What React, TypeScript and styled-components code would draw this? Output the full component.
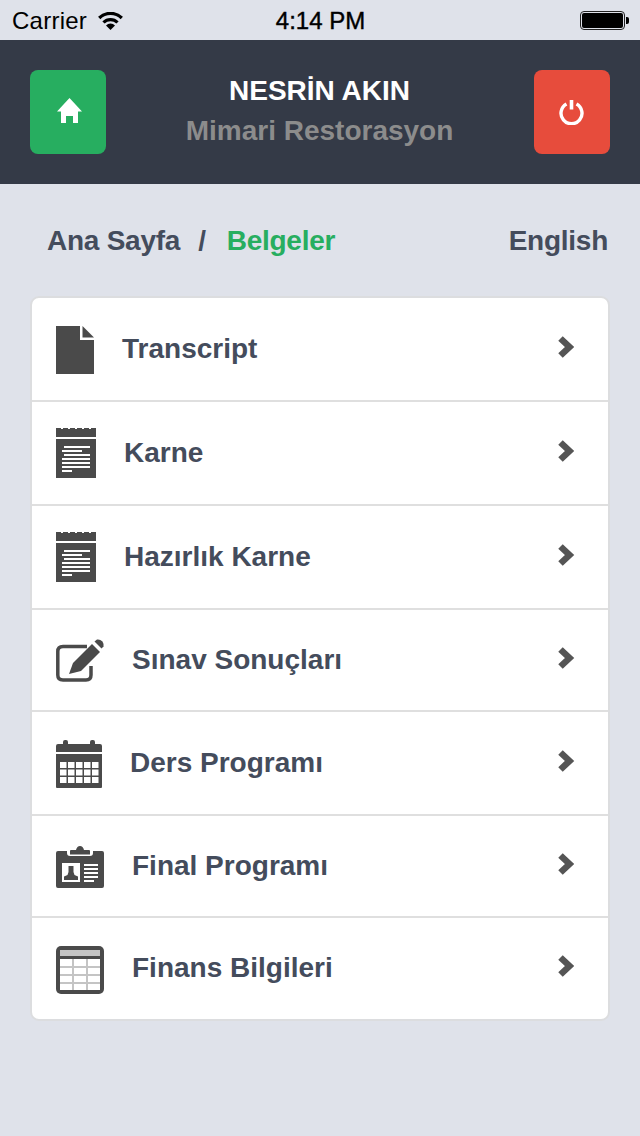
import React from "react";
import styled, { createGlobalStyle } from "styled-components";

const GlobalStyle = createGlobalStyle`
  html, body {
    margin: 0;
    padding: 0;
    background: #dfe2ea;
  }
  body {
    font-family: "Liberation Sans", Arial, sans-serif;
  }
`;

const Screen = styled.div`
  width: 640px;
  height: 1136px;
  background: #dfe2ea;
  overflow: hidden;
`;

const StatusBar = styled.div`
  height: 40px;
  display: grid;
  grid-template-columns: 1fr auto 1fr;
  align-items: center;
  padding: 2px 11px 0 12px;
  box-sizing: border-box;
  color: #000;
  font-size: 24px;
`;

const Carrier = styled.div`
  display: flex;
  align-items: center;
  gap: 11px;
  letter-spacing: 0.25px;
`;

const Clock = styled.div`
  font-weight: 400;
  -webkit-text-stroke: 0.4px #000;
`;

const Battery = styled.div`
  justify-self: end;
  display: flex;
  align-items: center;
  margin-top: -1px;
`;

const BatteryBody = styled.div`
  width: 45px;
  height: 19px;
  box-sizing: border-box;
  border: 1px solid #222;
  border-radius: 4px;
  padding: 1px;
`;

const BatteryFill = styled.div`
  height: 100%;
  background: #000;
  border-radius: 2px;
`;

const BatteryCap = styled.div`
  width: 3px;
  height: 7px;
  margin-left: 1px;
  background: #000;
  border-radius: 0 2px 2px 0;
`;

const Header = styled.header`
  height: 144px;
  background: #343a47;
  display: flex;
  align-items: center;
  justify-content: space-between;
  padding: 0 30px;
  box-sizing: border-box;
`;

const SquareButton = styled.button<{ $tone: string }>`
  width: 76px;
  height: 84px;
  border: 0;
  padding: 0;
  border-radius: 8px;
  background: ${(p) => p.$tone};
  display: flex;
  align-items: center;
  justify-content: center;
`;

const Who = styled.div`
  text-align: center;
  font-weight: 700;
  font-size: 28px;
  line-height: 40px;
  padding-bottom: 2px;
  margin-left: -1px;
`;

const Name = styled.div`
  color: #fff;
`;

const Dept = styled.div`
  color: #8c8c8c;
`;

const Crumbs = styled.nav`
  display: flex;
  align-items: center;
  justify-content: space-between;
  height: 112px;
  box-sizing: border-box;
  padding: 2px 32px 0 47px;
  font-size: 28px;
  font-weight: 700;
  letter-spacing: -0.25px;
  color: #444c5c;
`;

const Trail = styled.div`
  display: flex;
  gap: 18px;
`;

const Current = styled.span`
  color: #27ae60;
  margin-left: 3px;
`;

const Card = styled.ul`
  list-style: none;
  margin: 0 30px;
  padding: 0;
  background: #fff;
  border-radius: 9px;
  border: 2px solid #dcdddf;
  overflow: hidden;
`;

const Row = styled.li<{ $height: number }>`
  height: ${(p) => p.$height}px;
  box-sizing: border-box;
  display: flex;
  align-items: center;
  padding: 0 32px 0 24px;
  border-bottom: 2px solid #dfdfdf;
  &:last-child {
    border-bottom: 0;
  }
`;

const RowIcon = styled.div`
  display: flex;
  margin: 2px 28px 0 0;
`;

const RowLabel = styled.span`
  flex: 1;
  font-size: 28px;
  font-weight: 700;
  color: #444c5c;
  margin-bottom: 1px;
`;

const ChevronGlyph = styled.svg`
  margin-bottom: 5px;
`;

const HomeGlyph = styled.svg`
  margin: 0 0 3px 3px;
`;

const ReportGlyph = styled.svg`
  margin-top: -2px;
`;

const ICON = "#4a4a4a";

const HomeIcon = () => (
  <HomeGlyph width="25" height="25" viewBox="0 0 25 25">
    <path fill="#fff" d="M12.500 0 L25 13.500 L21 13.500 V25 H16 V18 H9 V25 H4 V13.500 H0 Z" />
  </HomeGlyph>
);

const PowerIcon = () => (
  <svg width="25" height="26" viewBox="0 0 25 26" fill="none" stroke="#fff" strokeWidth="3.400">
    <path d="M7.500 5 A10.500 10.500 0 1 0 17.500 5" />
    <path d="M12.500 1 V10.500" strokeWidth="3.600" />
  </svg>
);

const WifiIcon = () => (
  <svg width="25" height="18" viewBox="0 0 25 18" fill="none" stroke="#000" strokeWidth="3.200">
    <path d="M1.200 6 A16 16 0 0 1 23.800 6" />
    <path d="M5.500 10.500 A9.800 9.800 0 0 1 19.500 10.500" />
    <path fill="#000" stroke="none" d="M12.500 18 L8 13.500 A6.200 6.200 0 0 1 17 13.500 Z" />
  </svg>
);

const DocIcon = () => (
  <svg width="38" height="48" viewBox="0 0 38 48">
    <path fill={ICON} d="M0 0 H24 V14 H38 V48 H0 Z" />
    <path fill={ICON} d="M26.500 0 L38 11.500 H26.500 Z" />
  </svg>
);

const ReportIcon = () => (
  <ReportGlyph width="40" height="50" viewBox="0 0 40 50">
    <path fill={ICON} d="M0 1 H40 V9 H0 Z M0 11 H40 V50 H0 Z" />
    <path fill={ICON} d="M0 0 H5 V1 H0 Z M7 0 H12 V1 H7 Z M14 0 H19 V1 H14 Z M21 0 H26 V1 H21 Z M28 0 H33 V1 H28 Z M35 0 H40 V1 H35 Z" />
    <path fill="#fff" d="M8 18 H34 V20 H8 Z M6 22 H26 V24 H6 Z M8 26 H34 V28 H8 Z M6 30 H34 V32 H6 Z M6 34 H34 V36 H6 Z M6 38 H34 V40 H6 Z M6 42 H16 V44 H6 Z" />
  </ReportGlyph>
);

const EditIcon = () => (
  <svg width="48" height="44" viewBox="0 0 48 44">
    <path fill="none" stroke={ICON} strokeWidth="3.500" d="M31 7.500 H7 Q1.800 7.500 1.800 12.500 V36 Q1.800 41 7 41 H30 Q35 41 35 36 V27" />
    <path fill={ICON} d="M13 35 L17 24 L36 5 L44 13 L25 32 Z" />
    <path fill={ICON} d="M38.500 2.500 L41 0.500 Q44 0 46.500 2.500 Q48 5 47.500 7.500 L45.500 9.500 Z" />
  </svg>
);

const CalendarIcon = () => (
  <svg width="46" height="48" viewBox="0 0 46 48">
    <path fill={ICON} d="M0 6 Q0 4 2 4 H7 V2 Q7 0 9 0 H10 Q12 0 12 2 V4 H34 V2 Q34 0 36 0 H37 Q39 0 39 2 V4 H44 Q46 4 46 6 V12 H0 Z" />
    <path fill={ICON} d="M0 14 H46 V47 Q46 48 45 48 H1 Q0 48 0 47 Z" />
    <g fill="#fff">
      {[22, 29.5, 37].map((y) =>
        [4, 12, 20, 28, 36].map((x) => <rect key={`${y}-${x}`} x={x} y={y} width="6.500" height="6" />)
      )}
    </g>
  </svg>
);

const BadgeIcon = () => (
  <svg width="48" height="42" viewBox="0 0 48 42">
    <path fill={ICON} d="M2 5 H11 V7 Q11 10 14 10 H34 Q37 10 37 7 V5 H46 Q48 5 48 7 V40 Q48 42 46 42 H2 Q0 42 0 40 V7 Q0 5 2 5 Z" />
    <path fill={ICON} d="M14 5 Q14 4 15 4 H20 Q21 0 24 0 Q27 0 28 4 H33 Q34 4 34 5 V8.500 H14 Z" />
    <rect x="6" y="17" width="18" height="19" fill="#fff" />
    <path fill={ICON} d="M12.500 20 H17.500 V26 L18.500 29 L22 30.500 V34 H8 V30.500 L11.500 29 L12.500 26 Z" />
    <path fill="#fff" d="M28 18 H42 V20 H28 Z M28 22 H42 V24 H28 Z M28 26 H42 V28 H28 Z M28 30 H42 V32 H28 Z M28 34 H38 V36 H28 Z" />
  </svg>
);

const TableIcon = () => (
  <svg width="48" height="48" viewBox="0 0 48 48">
    <rect width="48" height="48" rx="5" fill={ICON} />
    <rect x="4" y="4" width="40" height="6" fill="#c4c4c4" />
    <rect x="4" y="13" width="40" height="31" fill="#fff" />
    <path fill="#c4c4c4" d="M4 20 H44 V22 H4 Z M4 28 H44 V30 H4 Z M4 36 H44 V38 H4 Z M16 13 H18 V44 H16 Z M30 13 H32 V44 H30 Z" />
  </svg>
);

const Chevron = () => (
  <ChevronGlyph width="19" height="22" viewBox="0 0 19 22">
    <path fill="none" stroke="#555" strokeWidth="6.500" d="M3.500 2.500 L12.500 11 L3.500 19.500" />
  </ChevronGlyph>
);

const rows = [
  { label: "Transcript", icon: <DocIcon />, height: 104 },
  { label: "Karne", icon: <ReportIcon />, height: 104 },
  { label: "Hazırlık Karne", icon: <ReportIcon />, height: 104 },
  { label: "Sınav Sonuçları", icon: <EditIcon />, height: 102 },
  { label: "Ders Programı", icon: <CalendarIcon />, height: 104 },
  { label: "Final Programı", icon: <BadgeIcon />, height: 102 },
  { label: "Finans Bilgileri", icon: <TableIcon />, height: 101 },
];

const App = () => {
  return (
    <Screen>
      <GlobalStyle />
      <StatusBar>
        <Carrier>
          Carrier
          <WifiIcon />
        </Carrier>
        <Clock>4:14 PM</Clock>
        <Battery>
          <BatteryBody>
            <BatteryFill />
          </BatteryBody>
          <BatteryCap />
        </Battery>
      </StatusBar>
      <Header>
        <SquareButton $tone="#27ae60">
          <HomeIcon />
        </SquareButton>
        <Who>
          <Name>NESRİN AKIN</Name>
          <Dept>Mimari Restorasyon</Dept>
        </Who>
        <SquareButton $tone="#e74c3c">
          <PowerIcon />
        </SquareButton>
      </Header>
      <Crumbs>
        <Trail>
          <span>Ana Sayfa</span>
          <span>/</span>
          <Current>Belgeler</Current>
        </Trail>
        <span>English</span>
      </Crumbs>
      <Card>
        {rows.map((row) => (
          <Row key={row.label} $height={row.height}>
            <RowIcon>{row.icon}</RowIcon>
            <RowLabel>{row.label}</RowLabel>
            <Chevron />
          </Row>
        ))}
      </Card>
    </Screen>
  );
};

export default App;
